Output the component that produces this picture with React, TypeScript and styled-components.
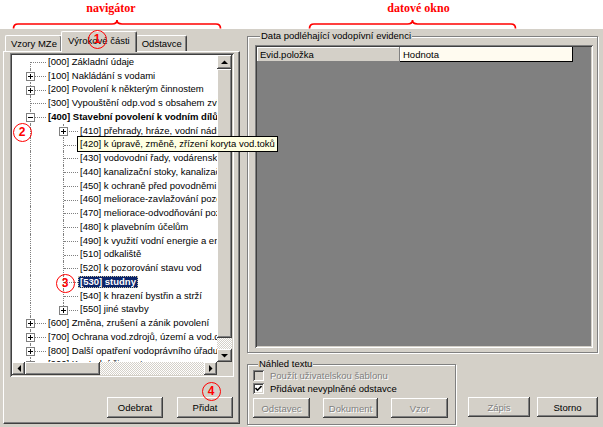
import React from "react";
import styled, { createGlobalStyle, css } from "styled-components";

const FACE = "#d4d0c8";

const GlobalStyle = createGlobalStyle`
  html, body { margin: 0; padding: 0; background: #ffffff; }
  body { font-family: "Liberation Sans", Arial, sans-serif; font-size: 9.5px; }
  * { box-sizing: border-box; }
`;

const raised = css`
  box-shadow: inset -1px -1px #404040, inset 1px 1px #ffffff, inset -2px -2px #808080, inset 2px 2px ${FACE};
`;
const sunken = css`
  box-shadow: inset 1px 1px #808080, inset -1px -1px #ffffff, inset 2px 2px #404040, inset -2px -2px ${FACE};
`;
const dither = css`
  background: repeating-conic-gradient(#ffffff 0 25%, ${FACE} 0 50%) 0 0 / 2px 2px;
`;

const Screen = styled.div`
  position: relative;
  width: 603px;
  height: 427px;
  overflow: hidden;
  display: flex;
  flex-direction: column;
  color: #000;
  font-family: "Liberation Sans", Arial, sans-serif;
  font-size: 9.5px;
`;

/* ---------- annotation strip ---------- */
const AnnotationBar = styled.div`
  flex: 0 0 29px;
  height: 29px;
  display: flex;
  background: #ffffff;
`;
const Annotation = styled.div<{ $left: number; $width: number }>`
  margin-left: ${(p) => p.$left}px;
  width: ${(p) => p.$width}px;
  display: flex;
  flex-direction: column;
  align-items: center;
`;
const AnnotationLabel = styled.div<{ $shift: number }>`
  height: 19px;
  padding-top: 2px;
  padding-left: ${(p) => Math.max(0, p.$shift * 2)}px;
  padding-right: ${(p) => Math.max(0, -p.$shift * 2)}px;
  font-family: "Liberation Serif", "Times New Roman", serif;
  font-weight: bold;
  font-size: 12px;
  line-height: 13px;
  color: #ff0000;
`;

const Brace = ({ width }: { width: number }) => {
  const m = width / 2;
  return (
    <svg width={width} height={10} viewBox={`0 0 ${width} 10`}>
      <path
        d={`M1.5 9.5 Q1.5 5 6 5 L${m - 5} 5 Q${m} 5 ${m} 1 Q${m} 5 ${m + 5} 5 L${width - 6} 5 Q${width - 1.5} 5 ${width - 1.5} 9.5`}
        fill="none"
        stroke="#ff0000"
        strokeWidth={1.7}
      />
    </svg>
  );
};

/* ---------- window ---------- */
const Window = styled.div`
  flex: 1;
  display: flex;
  align-items: flex-start;
  gap: 7px;
  padding-left: 3px;
  background: ${FACE};
`;

const LeftPanel = styled.div`
  width: 237px;
  display: flex;
  flex-direction: column;
`;

const TabStrip = styled.div`
  position: relative;
  z-index: 2;
  height: 22px;
  display: flex;
  align-items: flex-end;
  padding-left: 2px;
`;

const Tab = styled.div<{ $active?: boolean }>`
  position: relative;
  z-index: ${(p) => (p.$active ? 2 : 1)};
  height: ${(p) => (p.$active ? 21 : 16)}px;
  margin: 0 ${(p) => (p.$active ? -1 : 0)}px ${(p) => (p.$active ? -1 : 0)}px;
  padding: ${(p) => (p.$active ? "3px 6px 0" : "2px 4px 0 5px")};
  background: ${FACE};
  border-top: 1px solid #ffffff;
  border-left: 1px solid #ffffff;
  border-right: 1px solid #404040;
  border-radius: 2px 2px 0 0;
  box-shadow: inset -1px 0 #808080;
  line-height: 12px;
  white-space: nowrap;
`;

const TabPage = styled.div`
  position: relative;
  z-index: 1;
  height: 373px;
  display: flex;
  flex-direction: column;
  padding: 1px 5px 0 6px;
  border-top: 1px solid #ffffff;
  border-left: 1px solid #ffffff;
  border-right: 1px solid #404040;
  border-bottom: 1px solid #404040;
  box-shadow: inset -1px -1px #808080;
`;

const ButtonRow = styled.div`
  display: flex;
  justify-content: flex-end;
  gap: 14px;
  margin-top: 20px;
  padding-right: 1px;
`;

const PushButton = styled.button<{ $w: number; $h?: number }>`
  width: ${(p) => p.$w}px;
  height: ${(p) => p.$h ?? 20}px;
  margin: 0;
  padding: 0;
  border: none;
  background: ${FACE};
  ${raised};
  font-family: "Liberation Sans", Arial, sans-serif;
  font-size: 9.5px;
  color: #000;
  &:disabled {
    color: #808080;
    text-shadow: 1px 1px #ffffff;
  }
`;

/* ---------- tree ---------- */
const Tree = styled.div`
  width: 224px;
  height: 324px;
  padding: 2px;
  background: #ffffff;
  ${sunken};
  display: grid;
  grid-template-columns: 205px 15px;
  grid-template-rows: 307px 13px;
`;

const TreeList = styled.div`
  height: 307px;
  min-height: 0;
  overflow: hidden;
  background: #ffffff;
`;

const Row = styled.div`
  display: flex;
  align-items: center;
  height: 13.75px;
  white-space: nowrap;
`;

const Guide = styled.div<{ $w: number; $x: number; $first?: boolean; $last?: boolean; $branch?: boolean }>`
  position: relative;
  flex: 0 0 ${(p) => p.$w}px;
  align-self: stretch;
  &::before {
    content: "";
    position: absolute;
    left: ${(p) => p.$x}px;
    top: ${(p) => (p.$first ? "7px" : "0")};
    height: ${(p) => (p.$first || p.$last ? "7px" : "100%")};
    border-left: 1px dotted #808080;
  }
  ${(p) =>
    p.$branch &&
    css`
      &::after {
        content: "";
        position: absolute;
        left: ${p.$x + 1}px;
        right: 0;
        top: 7px;
        border-top: 1px dotted #808080;
      }
    `}
`;

const ExpanderSvg = styled.svg<{ $x: number }>`
  position: absolute;
  z-index: 1;
  left: ${(p) => p.$x - 4}px;
  top: 3px;
  display: block;
`;

const Expander = ({ x, open }: { x: number; open?: boolean }) => (
  <ExpanderSvg $x={x} width={9} height={9} viewBox="0 0 9 9">
    <rect x={0.5} y={0.5} width={8} height={8} fill="#ffffff" stroke="#808080" />
    <line x1={2} y1={4.5} x2={7} y2={4.5} stroke="#000" />
    {!open && <line x1={4.5} y1={2} x2={4.5} y2={7} stroke="#000" />}
  </ExpanderSvg>
);

const NodeLabel = styled.span<{ $bold?: boolean; $selected?: boolean }>`
  height: 12px;
  padding: 0 2px;
  line-height: 12px;
  font-weight: ${(p) => (p.$bold || p.$selected ? "bold" : "normal")};
  background: ${(p) => (p.$selected ? "#0a246a" : "transparent")};
  color: ${(p) => (p.$selected ? "#ffffff" : "#000000")};
  outline: ${(p) => (p.$selected ? "1px dotted #c8c0a0" : "none")};
  outline-offset: -1px;
`;

const VScroll = styled.div`
  display: flex;
  flex-direction: column;
  min-height: 0;
`;
const HScroll = styled.div`
  display: flex;
  min-width: 0;
`;
const ScrollButton = styled.div<{ $w: number; $h: number }>`
  flex: 0 0 auto;
  width: ${(p) => p.$w}px;
  height: ${(p) => p.$h}px;
  background: ${FACE};
  ${raised};
  display: flex;
  align-items: center;
  justify-content: center;
`;
const ScrollThumb = styled.div<{ $len: number }>`
  flex: 0 0 ${(p) => p.$len}px;
  background: ${FACE};
  ${raised};
`;
const ScrollTrack = styled.div`
  flex: 1;
  ${dither};
`;
const ScrollCorner = styled.div`
  background: ${FACE};
`;

const Arrow = ({ dir }: { dir: "up" | "down" | "left" | "right" }) => {
  const pts = {
    up: "0,4 7,4 3.5,0.5",
    down: "0,0 7,0 3.5,3.5",
    left: "4,0 4,7 0.5,3.5",
    right: "0,0 0,7 3.5,3.5",
  }[dir];
  const vertical = dir === "up" || dir === "down";
  return (
    <svg width={vertical ? 7 : 4} height={vertical ? 4 : 7} viewBox={vertical ? "0 0 7 4" : "0 0 4 7"}>
      <polygon points={pts} fill="#000" />
    </svg>
  );
};

/* ---------- right side ---------- */
const RightColumn = styled.div`
  width: 351px;
  margin-top: 2px;
  display: flex;
  flex-direction: column;
`;

const Group = styled.fieldset<{ $w: number; $pad: string }>`
  margin: 0;
  min-width: 0;
  width: ${(p) => p.$w}px;
  padding: ${(p) => p.$pad};
  border: 1px solid #808080;
  box-shadow: inset 1px 1px #ffffff, 1px 1px #ffffff;
`;

const GroupTitle = styled.legend`
  margin-left: 5px;
  padding: 0 1px;
  line-height: 10px;
  font-size: 9.5px;
  background: ${FACE};
`;

const DataGrid = styled.div`
  height: 303px;
  padding: 2px;
  background: #808080;
  ${sunken};
`;

const GridHeader = styled.div`
  display: flex;
  height: 15px;
`;

const HeaderCell = styled.div<{ $w: number; $value?: boolean }>`
  width: ${(p) => p.$w}px;
  padding: 0 3px;
  line-height: 15px;
  background: ${(p) => (p.$value ? "#fffbf0" : FACE)};
  box-shadow: ${(p) =>
    p.$value
      ? "inset -1px -1px #000000, inset 1px 1px #ffffff"
      : "inset -1px -1px #808080, inset 1px 1px #ffffff"};
`;

const BottomRow = styled.div`
  display: flex;
  align-items: flex-end;
  margin-top: 6px;
`;

const CheckRow = styled.div<{ $disabled?: boolean }>`
  height: 13px;
  display: flex;
  align-items: center;
  gap: 6px;
  color: ${(p) => (p.$disabled ? "#808080" : "#000")};
  text-shadow: ${(p) => (p.$disabled ? "1px 1px #ffffff" : "none")};
`;

const CheckBox = styled.span<{ $disabled?: boolean }>`
  flex: 0 0 11px;
  width: 11px;
  height: 11px;
  display: flex;
  align-items: center;
  justify-content: center;
  background: ${(p) => (p.$disabled ? FACE : "#ffffff")};
  ${sunken};
`;

const GroupButtons = styled.div`
  display: flex;
  justify-content: space-between;
  margin-top: 3px;
  padding-right: 1px;
`;

const ActionBar = styled.div`
  display: flex;
  gap: 7px;
  margin-left: 12px;
  padding-bottom: 8px;
`;

/* ---------- overlays ---------- */
const Tooltip = styled.div`
  position: absolute;
  z-index: 4;
  left: 77px;
  top: 136px;
  height: 16px;
  padding: 0 2px;
  line-height: 14px;
  white-space: nowrap;
  background: #ffffe1;
  border: 1px solid #000000;
`;

const Marker = styled.div<{ $x: number; $y: number }>`
  position: absolute;
  z-index: 5;
  left: ${(p) => p.$x - 9.5}px;
  top: ${(p) => p.$y - 9.5}px;
  width: 19px;
  height: 19px;
  border: 1.6px solid #ff0000;
  border-radius: 50%;
  display: flex;
  align-items: center;
  justify-content: center;
  color: #ff0000;
  font-family: "Liberation Sans", Arial, sans-serif;
  font-weight: bold;
  font-size: 12px;
  line-height: 1;
`;

type Node = {
  label: string;
  level: 0 | 1;
  box?: "+" | "-";
  bold?: boolean;
  selected?: boolean;
  first?: boolean;
  last?: boolean;
};

const nodes: Node[] = [
  { label: "[000] Základní údaje", level: 0, first: true },
  { label: "[100] Nakládání s vodami", level: 0, box: "+" },
  { label: "[200] Povolení k některým činnostem", level: 0, box: "+" },
  { label: "[300] Vypouštění odp.vod s obsahem zvl.nebezpečných látek", level: 0 },
  { label: "[400] Stavební povolení k vodním dílům", level: 0, box: "-", bold: true },
  { label: "[410] přehrady, hráze, vodní nádrže", level: 1, box: "+" },
  { label: "[420] k úpravě, změně, zřízení koryta vod.toků", level: 1 },
  { label: "[430] vodovodní řady, vodárenské objekty", level: 1 },
  { label: "[440] kanalizační stoky, kanalizační objekty", level: 1 },
  { label: "[450] k ochraně před povodněmi", level: 1 },
  { label: "[460] meliorace-zavlažování pozemků", level: 1 },
  { label: "[470] meliorace-odvodňování pozemků", level: 1 },
  { label: "[480] k plavebním účelům", level: 1 },
  { label: "[490] k využití vodní energie a energetického potenciálu", level: 1 },
  { label: "[510] odkaliště", level: 1 },
  { label: "[520] k pozorování stavu vod", level: 1 },
  { label: "[530] studny", level: 1, selected: true },
  { label: "[540] k hrazení bystřin a strží", level: 1 },
  { label: "[550] jiné stavby", level: 1, box: "+", last: true },
  { label: "[600] Změna, zrušení a zánik povolení", level: 0, box: "+" },
  { label: "[700] Ochrana vod.zdrojů, území a vod.děl", level: 0, box: "+" },
  { label: "[800] Další opatření vodoprávního úřadu", level: 0, box: "+" },
  { label: "[900] Kontrolní činnost", level: 0, box: "+" },
];

export default function App() {
  return (
    <Screen>
      <GlobalStyle />
      <AnnotationBar>
        <Annotation $left={12} $width={210}>
          <AnnotationLabel $shift={-6}>navigátor</AnnotationLabel>
          <Brace width={210} />
        </Annotation>
        <Annotation $left={86} $width={209}>
          <AnnotationLabel $shift={6}>datové okno</AnnotationLabel>
          <Brace width={209} />
        </Annotation>
      </AnnotationBar>

      <Window>
        <LeftPanel>
          <TabStrip>
            <Tab>Vzory MZe</Tab>
            <Tab $active>Výrokové části</Tab>
            <Tab>Odstavce</Tab>
          </TabStrip>
          <TabPage>
            <Tree>
              <TreeList>
                {nodes.map((n, i) => (
                  <Row key={i}>
                    {n.level === 1 && <Guide $w={34} $x={18} />}
                    <Guide
                      $w={n.level === 0 ? 34 : 32}
                      $x={n.level === 0 ? 18 : 17}
                      $first={n.first}
                      $last={n.last}
                      $branch
                    >
                      {n.box && <Expander x={n.level === 0 ? 18 : 17} open={n.box === "-"} />}
                    </Guide>
                    <NodeLabel $bold={n.bold} $selected={n.selected}>
                      {n.label}
                    </NodeLabel>
                  </Row>
                ))}
              </TreeList>
              <VScroll>
                <ScrollButton $w={15} $h={14}>
                  <Arrow dir="up" />
                </ScrollButton>
                <ScrollThumb $len={269} />
                <ScrollTrack />
                <ScrollButton $w={15} $h={13}>
                  <Arrow dir="down" />
                </ScrollButton>
              </VScroll>
              <HScroll>
                <ScrollButton $w={13} $h={13}>
                  <Arrow dir="left" />
                </ScrollButton>
                <ScrollThumb $len={75} />
                <ScrollTrack />
                <ScrollButton $w={13} $h={13}>
                  <Arrow dir="right" />
                </ScrollButton>
              </HScroll>
              <ScrollCorner />
            </Tree>
            <ButtonRow>
              <PushButton $w={56} $h={21}>Odebrat</PushButton>
              <PushButton $w={56} $h={21}>Přidat</PushButton>
            </ButtonRow>
          </TabPage>
        </LeftPanel>

        <RightColumn>
          <Group $w={351} $pad="4px 4px 4px 7px">
            <GroupTitle>Data podléhající vodopívní evidenci</GroupTitle>
            <DataGrid>
              <GridHeader>
                <HeaderCell $w={143}>Evid.položka</HeaderCell>
                <HeaderCell $w={173} $value>
                  Hodnota
                </HeaderCell>
              </GridHeader>
            </DataGrid>
          </Group>

          <BottomRow>
            <Group $w={209} $pad="0 6px 6px 5px">
              <GroupTitle>Náhled textu</GroupTitle>
              <CheckRow $disabled>
                <CheckBox $disabled />
                Použít uživatelskou šablonu
              </CheckRow>
              <CheckRow>
                <CheckBox>
                  <svg width={7} height={7} viewBox="0 0 7 7">
                    <path d="M0.5 3 L2.5 5.2 L6.5 1" fill="none" stroke="#000" strokeWidth={1.6} />
                  </svg>
                </CheckBox>
                Přidávat nevyplněné odstavce
              </CheckRow>
              <GroupButtons>
                <PushButton $w={57} disabled>
                  Odstavec
                </PushButton>
                <PushButton $w={55} disabled>
                  Dokument
                </PushButton>
                <PushButton $w={57} disabled>
                  Vzor
                </PushButton>
              </GroupButtons>
            </Group>
            <ActionBar>
              <PushButton $w={62} disabled>
                Zápis
              </PushButton>
              <PushButton $w={61}>Storno</PushButton>
            </ActionBar>
          </BottomRow>
        </RightColumn>
      </Window>

      <Tooltip>[420] k úpravě, změně, zřízení koryta vod.toků</Tooltip>

      <Marker $x={97} $y={39}>1</Marker>
      <Marker $x={22} $y={132}>2</Marker>
      <Marker $x={65} $y={283}>3</Marker>
      <Marker $x={211} $y={391}>4</Marker>
    </Screen>
  );
}
